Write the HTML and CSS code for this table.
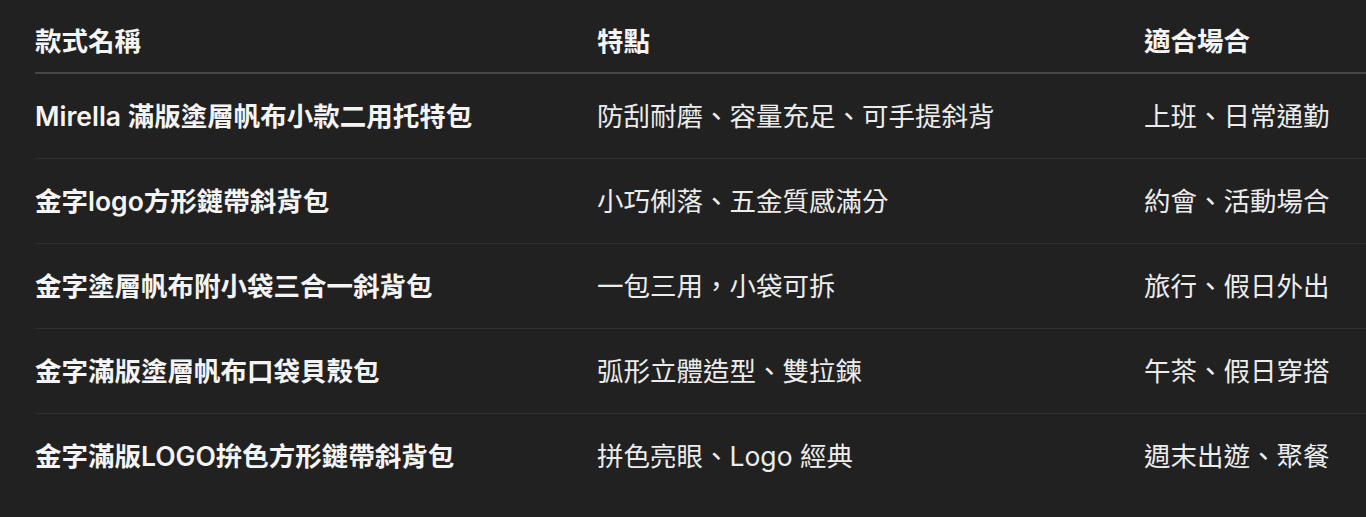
FILE: index.html
```html
<!DOCTYPE html>
<html>

<head>
    <title>款式比較</title>
    <meta charset="utf-8">
    <meta name="viewport" content="width=device-width, initial-scale=1.0">
    <link rel="stylesheet" href="styles.css">
</head>

<body>
    <div class="wrap">
        <table class="compare">
            <colgroup>
                <col class="col-name">
                <col class="col-feature">
                <col class="col-place">
            </colgroup>
            <thead>
                <tr>
                    <th>款式名稱</th>
                    <th>特點</th>
                    <th>適合場合</th>
                </tr>
            </thead>
            <tbody>
                <tr>
                    <td class="name">Mirella 滿版塗層帆布小款二用托特包</td>
                    <td>防刮耐磨、容量充足、可手提斜背</td>
                    <td>上班、日常通勤</td>
                </tr>
                <tr>
                    <td class="name">金字logo方形鏈帶斜背包</td>
                    <td>小巧俐落、五金質感滿分</td>
                    <td>約會、活動場合</td>
                </tr>
                <tr>
                    <td class="name">金字塗層帆布附小袋三合一斜背包</td>
                    <td>一包三用，小袋可拆</td>
                    <td>旅行、假日外出</td>
                </tr>
                <tr>
                    <td class="name">金字滿版塗層帆布口袋貝殼包</td>
                    <td>弧形立體造型、雙拉鍊</td>
                    <td>午茶、假日穿搭</td>
                </tr>
                <tr>
                    <td class="name">金字滿版LOGO拚色方形鏈帶斜背包</td>
                    <td>拼色亮眼、Logo 經典</td>
                    <td>週末出遊、聚餐</td>
                </tr>
            </tbody>
        </table>
    </div>
</body>

</html>
```

FILE: styles.css
```css
body {
    margin: 0;
    background-color: #212121;
    color: #ececec;
    font-family: Inter, "Noto Sans CJK TC", sans-serif;
    overflow: hidden;
}

.wrap {
    padding-left: 35px;
    overflow: hidden;
}

.compare {
    border-collapse: collapse;
    table-layout: fixed;
    width: 1420px;
    font-size: 26.5px;
    line-height: 39px;
}

.col-name {
    width: 562px
}

.col-feature {
    width: 547px
}

.compare th {
    text-align: left;
    font-weight: 600;
    color: #f4f4f4;
    padding: 22px 0 11px;
    border-bottom: 2px solid #474747;
}

.compare td {
    padding: 23px 0 22px;
    white-space: nowrap;
    border-bottom: 1px solid #303030;
}

.compare tbody tr:last-child td {
    border-bottom: none;
}

.compare td.name {
    font-weight: 600;
    color: #f4f4f4;
}
```
